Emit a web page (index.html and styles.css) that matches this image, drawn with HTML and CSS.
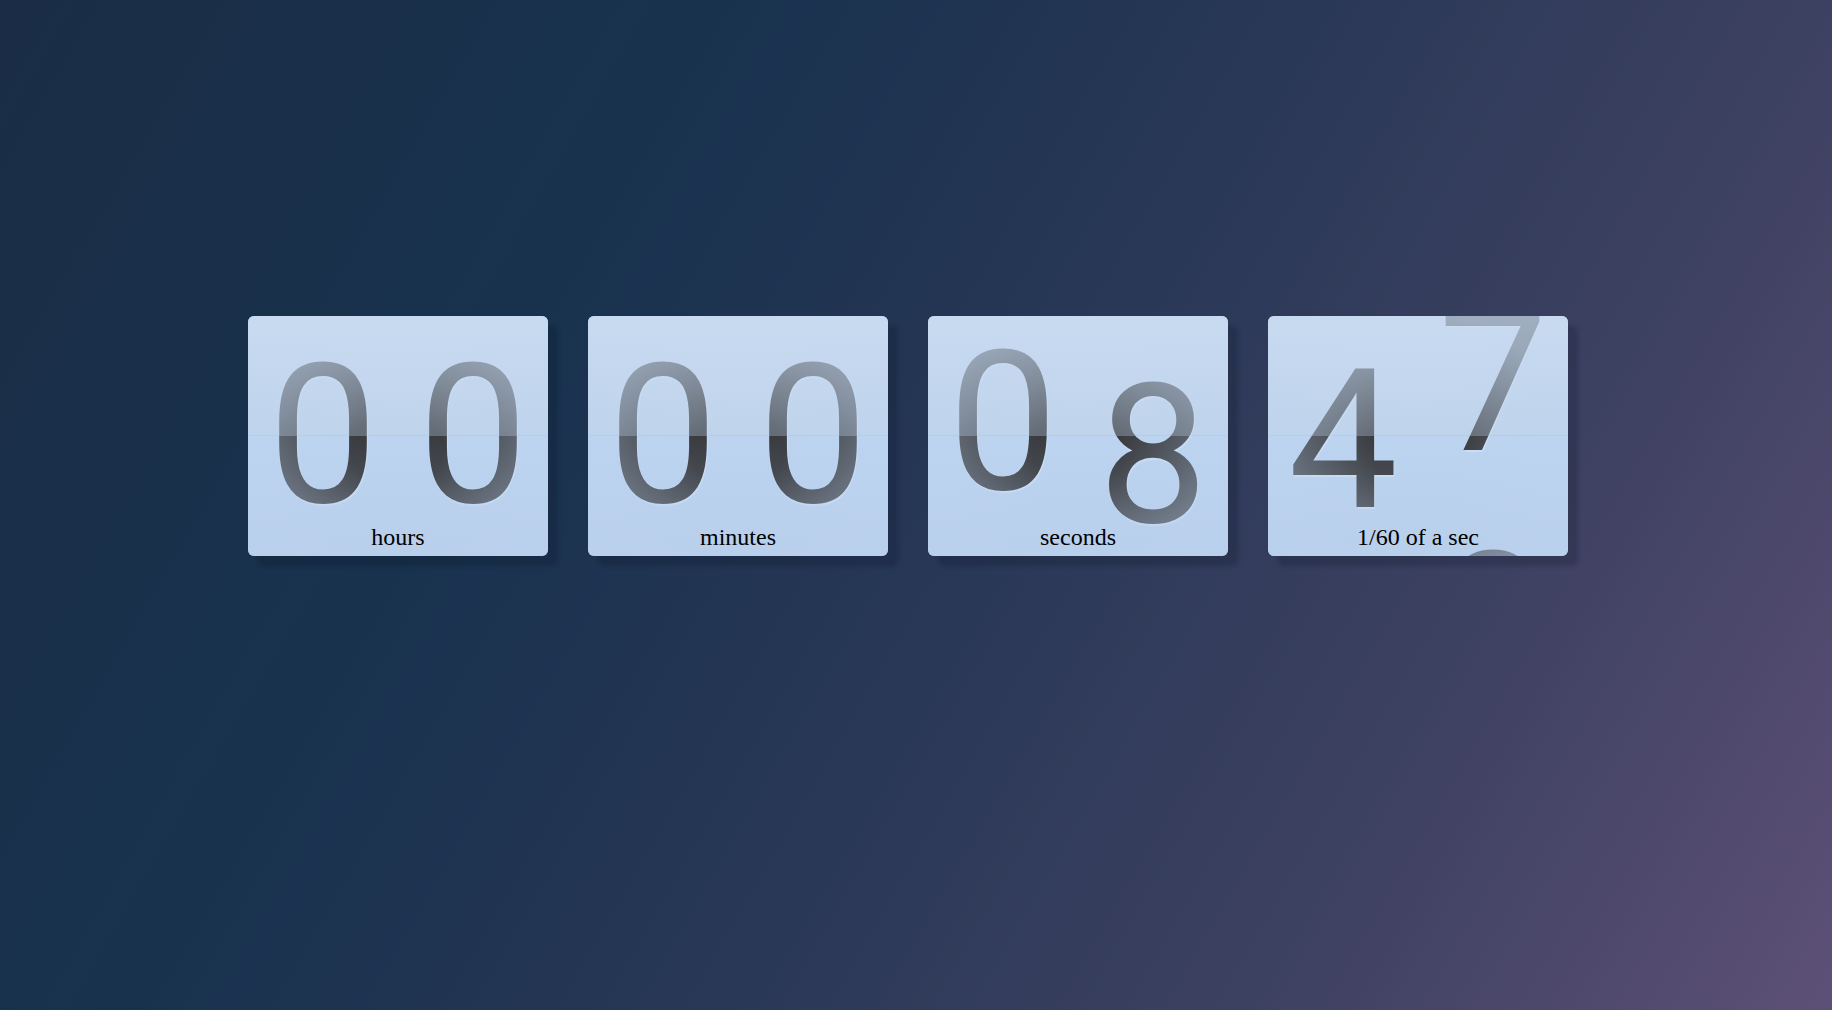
FILE: index.html
```html
<!DOCTYPE html>
<html lang="en">
<head>
<meta charset="utf-8">
<title>Counter</title>
<link rel="stylesheet" href="styles.css">
</head>
<body>
<main class="stage">
  <section class="counter">
    <div class="digits">
      <div class="col"><div class="strip" style="transform: translateY(0px)"><span>0</span></div></div>
      <div class="col"><div class="strip" style="transform: translateY(0px)"><span>0</span></div></div>
    </div>
    <div class="glass"></div>
    <div class="label">hours</div>
  </section>
  <section class="counter">
    <div class="digits">
      <div class="col"><div class="strip" style="transform: translateY(0px)"><span>0</span></div></div>
      <div class="col"><div class="strip" style="transform: translateY(0px)"><span>0</span></div></div>
    </div>
    <div class="glass"></div>
    <div class="label">minutes</div>
  </section>
  <section class="counter">
    <div class="digits">
      <div class="col"><div class="strip" style="transform: translateY(-13px)"><span>0</span></div></div>
      <div class="col"><div class="strip" style="transform: translateY(20px)"><span>8</span></div></div>
    </div>
    <div class="glass"></div>
    <div class="label">seconds</div>
  </section>
  <section class="counter">
    <div class="digits">
      <div class="col"><div class="strip" style="transform: translateY(5px)"><span>4</span></div></div>
      <div class="col"><div class="strip" style="transform: translateY(-52px)"><span>7</span><span>8</span></div></div>
    </div>
    <div class="glass"></div>
    <div class="label">1/60 of a sec</div>
  </section>
</main>
</body>
</html>
```

FILE: styles.css
```css
html, body {
  margin: 0;
  height: 100%;
}

body {
  min-height: 100vh;
  background: linear-gradient(120deg, #1b2d46 0%, #18324e 30%, #263655 50%, #3d4161 76%, #5d5076 100%);
  background-attachment: fixed;
}

.stage {
  display: flex;
  justify-content: center;
  gap: 40px;
  padding: 316px 16px 0 0;
}

.counter {
  position: relative;
  width: 300px;
  height: 240px;
  border-radius: 6px;
  overflow: hidden;
  background: linear-gradient(180deg, #c7daf0 0%, #c0d5ec 49.4%, #b8cce2 49.4%, #b8cce2 50.1%, #bcd4f0 50.1%, #b7cfeb 100%);
  box-shadow: 10px 10px 4px rgba(10, 16, 38, 0.22);
}

.digits {
  display: flex;
  height: 100%;
}

.col {
  flex: 1;
  height: 100%;
}

.strip {
  display: flex;
  flex-direction: column;
}

.strip span {
  display: block;
  height: 240px;
  line-height: 240px;
  text-align: center;
  font-family: Roboto, "Noto Sans", sans-serif;
  font-size: 195px;
  color: #393b3f;
  text-shadow: 1px 2px 1px rgba(222, 236, 251, 0.45);
}

.glass {
  position: absolute;
  inset: 0;
  pointer-events: none;
  background:
    linear-gradient(180deg,
      rgba(202, 220, 241, 0.56) 0%,
      rgba(198, 216, 238, 0.48) 20%,
      rgba(190, 210, 234, 0.32) 49.4%,
      rgba(182, 202, 226, 0.36) 49.4%,
      rgba(182, 202, 226, 0.36) 50.1%,
      rgba(189, 212, 240, 0) 50.1%,
      rgba(189, 212, 240, 0.06) 60%,
      rgba(185, 207, 236, 0.3) 100%),
    radial-gradient(ellipse 50% 58% at 50% 56%, rgba(190, 212, 240, 0) 30%, rgba(190, 212, 240, 0.38) 100%);
}

.label {
  position: absolute;
  left: 0;
  right: 0;
  bottom: 4px;
  line-height: 30px;
  text-align: center;
  font-family: "Liberation Serif", "Times New Roman", serif;
  font-size: 24px;
  color: #000;
}
```
